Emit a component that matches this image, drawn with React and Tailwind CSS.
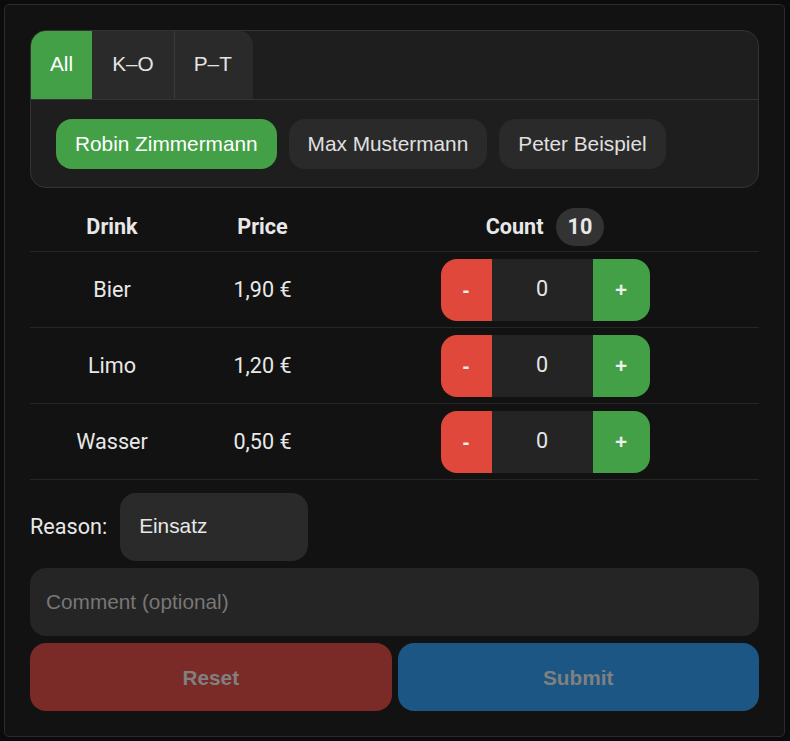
import React, { useState } from 'react'

const drinks = [
    { name: 'Bier', price: '1,90 €' },
    { name: 'Limo', price: '1,20 €' },
    { name: 'Wasser', price: '0,50 €' },
]

const tabs = ['All', 'K–O', 'P–T']
const people = ['Robin Zimmermann', 'Max Mustermann', 'Peter Beispiel']

const Stepper = ({ value, onMinus, onPlus }) => {
    return (
        <div className="flex h-[62px] w-[209px] overflow-hidden rounded-[16px]">
            <button
                onClick={onMinus}
                className="w-[51px] bg-[#e0483b] text-[20.8px] font-bold text-[#eeeeee] font-['Liberation_Sans',sans-serif]"
            >
                -
            </button>
            <div className="flex w-[101px] items-center justify-center bg-[#242424] text-[21.6px] text-[#e6e6e6]">
                {value}
            </div>
            <button
                onClick={onPlus}
                className="w-[57px] bg-[#43a047] text-[20.8px] font-bold text-[#eeeeee] font-['Liberation_Sans',sans-serif]"
            >
                +
            </button>
        </div>
    )
}

const App = () => {
    const [tab, setTab] = useState(0)
    const [person, setPerson] = useState(0)
    const [counts, setCounts] = useState([0, 0, 0])
    const [comment, setComment] = useState('')

    const change = (i, d) => {
        const next = [...counts]
        next[i] = Math.max(0, next[i] + d)
        setCounts(next)
    }

    return (
        <div className="min-h-[741px] bg-[#0b0b0b] pt-[4px] pl-[4px] pr-[5px] pb-[3px] font-['Roboto',sans-serif]">
            <div className="rounded-[5px] border border-[#2b2b2b] bg-[#121212] p-[25px]">
                {/* tabs + people */}
                <div className="overflow-hidden rounded-[16px] border border-[#333333] bg-[#1e1e1e] font-['Liberation_Sans',sans-serif]">
                    <div className="flex h-[69px] border-b border-[#333333]">
                        {tabs.map((t, i) => (
                            <button
                                key={t}
                                onClick={() => setTab(i)}
                                className={
                                    'flex h-full items-center pb-[3px] text-[20.8px] ' +
                                    (i === tab ? 'bg-[#43a047] text-white ' : 'bg-[#2a2a2a] text-[#e4e4e4] ') +
                                    (i === 1 ? 'border-r border-[#3a3a3a] px-[20px] ' : 'px-[19px] ') +
                                    (i === tabs.length - 1 ? 'rounded-tr-[14px] pr-[21px]' : '')
                                }
                            >
                                {t}
                            </button>
                        ))}
                    </div>
                    <div className="flex gap-[12px] px-[25px] pt-[19px] pb-[18px]">
                        {people.map((p, i) => (
                            <button
                                key={p}
                                onClick={() => setPerson(i)}
                                className={
                                    'h-[50px] rounded-[16px] px-[19px] text-[20.8px] ' +
                                    (i === person ? 'bg-[#43a047] text-white' : 'bg-[#2a2a2a] text-[#e0e0e0]')
                                }
                            >
                                {p}
                            </button>
                        ))}
                    </div>
                </div>

                {/* drinks table */}
                <div className="mt-[12px] text-[21.6px] text-[#e8e8e8]">
                    <div className="grid h-[52px] grid-cols-[164px_137px_1fr] items-center border-b border-[#262626] pt-[3px] font-bold">
                        <div className="text-center">Drink</div>
                        <div className="text-center">Price</div>
                        <div className="flex items-center justify-center gap-[12px]">
                            <span>Count</span>
                            <span className="flex h-[38px] items-center rounded-full bg-[#333333] px-[12px]">10</span>
                        </div>
                    </div>
                    {drinks.map((d, i) => (
                        <div key={d.name} className="grid h-[76px] grid-cols-[164px_137px_1fr] items-center border-b border-[#262626]">
                            <div className="pt-[2px] text-center">{d.name}</div>
                            <div className="pt-[2px] text-center">{d.price}</div>
                            <div className="flex justify-center">
                                <Stepper
                                    value={counts[i]}
                                    onMinus={() => change(i, -1)}
                                    onPlus={() => change(i, 1)}
                                />
                            </div>
                        </div>
                    ))}
                </div>

                {/* reason */}
                <div className="mt-[13px] flex items-center gap-[13px]">
                    <span className="text-[21.6px] text-[#e8e8e8]">Reason:</span>
                    <div className="flex h-[68px] w-[188px] items-center rounded-[16px] bg-[#2a2a2a] px-[19px] pb-[2px] text-[20.8px] text-[#e8e8e8] font-['Liberation_Sans',sans-serif]">
                        Einsatz
                    </div>
                </div>

                <input
                    type="text"
                    value={comment}
                    onChange={(e) => setComment(e.target.value)}
                    placeholder="Comment (optional)"
                    className="mt-[7px] block h-[68px] w-full rounded-[16px] bg-[#252525] px-[16px] text-[20.8px] text-[#e8e8e8] outline-none placeholder:text-[#777777] font-['Liberation_Sans',sans-serif]"
                />

                <div className="mt-[7px] grid grid-cols-2 gap-[6px] font-['Liberation_Sans',sans-serif]">
                    <button
                        onClick={() => setCounts([0, 0, 0])}
                        className="h-[68px] rounded-[16px] bg-[#7a2b27] pt-[2px] text-[20.8px] font-bold text-[#808080]"
                    >
                        Reset
                    </button>
                    <button className="h-[68px] rounded-[16px] bg-[#1b5684] pt-[2px] text-[20.8px] font-bold text-[#808080]">
                        Submit
                    </button>
                </div>
            </div>
        </div>
    )
}

export default App
